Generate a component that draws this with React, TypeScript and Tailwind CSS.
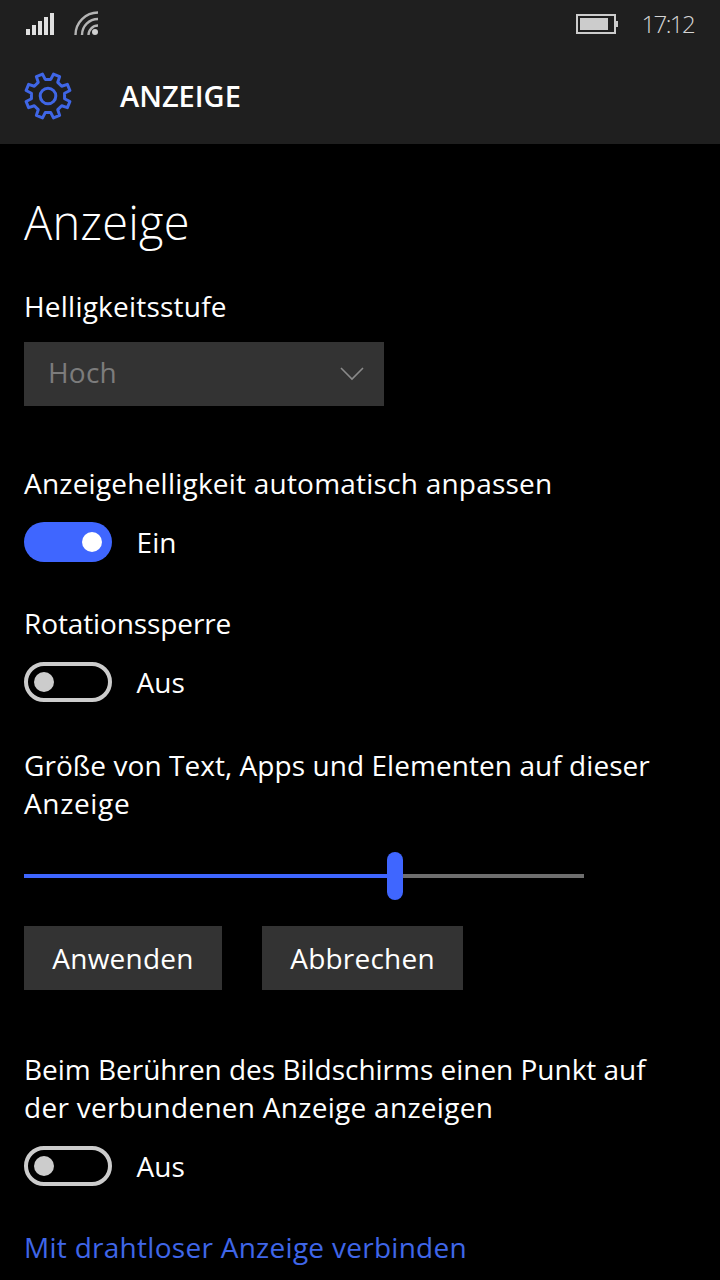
import React from 'react';

const Toggle = ({ on, label }: { on: boolean; label: string }) => (
    <div className="flex items-center h-10">
        {on ? (
            <div className="w-[88px] h-10 rounded-full bg-[#3f66ff] flex items-center justify-end pr-[10px]">
                <div className="w-5 h-5 rounded-full bg-white" />
            </div>
        ) : (
            <div className="w-[88px] h-10 rounded-full border-[4px] border-[#cccccc] flex items-center pl-[6px]">
                <div className="w-5 h-5 rounded-full bg-[#cccccc]" />
            </div>
        )}
        <span className="ml-[24.5px] text-[28px] leading-[38px] tracking-[0.1px] text-white">{label}</span>
    </div>
);

const SignalIcon = () => (
    <svg width="28" height="22" viewBox="0 0 28 22" fill="#e0e0e0">
        <rect x="0" y="16" width="4" height="6" />
        <rect x="6" y="12" width="4" height="10" />
        <rect x="12" y="8" width="4" height="14" />
        <rect x="18" y="4" width="4" height="18" />
        <rect x="24" y="0" width="4" height="22" />
    </svg>
);

const WifiIcon = () => (
    <svg width="24" height="24" viewBox="0 0 24 24" fill="none" stroke="#b4b4b4" strokeWidth="2.4">
        <path d="M1.5 24A22.5 22.5 0 0 1 24 1.5" />
        <path d="M8 24A16 16 0 0 1 24 8" />
        <path d="M14.5 24A9.5 9.5 0 0 1 24 14.5" />
        <circle cx="21" cy="21" r="3" fill="#d0d0d0" stroke="none" />
    </svg>
);

const BatteryIcon = () => (
    <svg width="42" height="20" viewBox="0 0 42 20">
        <rect x="1" y="1" width="38" height="18" fill="none" stroke="#cccccc" strokeWidth="2" />
        <rect x="4" y="4" width="28" height="12" fill="#cccccc" />
        <rect x="40" y="7" width="2" height="6" fill="#cccccc" />
    </svg>
);

// 8 teeth, rotated so a notch sits at the top
const gearPoints = Array.from({ length: 8 }, (_, i) => {
    const mid = 22.5 + i * 45;
    return [
        [mid - 13, 16.8],
        [mid - 8.5, 22.6],
        [mid + 8.5, 22.6],
        [mid + 13, 16.8],
    ]
        .map(([a, r]) => {
            const rad = (a * Math.PI) / 180;
            return `${(24 + r * Math.sin(rad)).toFixed(2)},${(24 - r * Math.cos(rad)).toFixed(2)}`;
        })
        .join(' ');
}).join(' ');

const GearIcon = () => (
    <svg width="48" height="48" viewBox="0 0 48 48" fill="none" stroke="#3f66e6" strokeWidth="3" strokeLinejoin="round">
        <polygon points={gearPoints} />
        <circle cx="24" cy="24" r="7.8" strokeWidth="3" />
    </svg>
);

export default function App() {
    return (
        <div className="w-[720px] h-[1280px] overflow-hidden bg-black text-white font-['Open_Sans',sans-serif]">
            <header className="h-[144px] bg-[#1f1f1f] px-6">
                <div className="h-[48px] flex items-center">
                    <div className="ml-[2px]">
                        <SignalIcon />
                    </div>
                    <div className="ml-[20px] mb-[2px]">
                        <WifiIcon />
                    </div>
                    <div className="ml-auto flex items-center">
                        <BatteryIcon />
                        <span className="ml-[23px] mr-[2px] text-[24px] font-light tracking-[-1.6px] text-[#d4d4d4]">17:12</span>
                    </div>
                </div>
                <div className="mt-[24px] h-[48px] flex items-center">
                    <GearIcon />
                    <span className="ml-[48px] text-[29px] font-semibold">ANZEIGE</span>
                </div>
            </header>

            <main className="px-6 text-[28px] leading-[38px] tracking-[0.22px]">
                <h1 className="mt-[46px] text-[47px] leading-[64px] font-[350] tracking-[0.2px]">Anzeige</h1>

                <p className="mt-[33px]">Helligkeitsstufe</p>
                <div className="mt-[17px] w-[360px] h-16 bg-[#333333] flex items-center justify-between pl-[24px] pr-[20px]">
                    <span className="mb-[5px] text-[#7c7c7c]">Hoch</span>
                    <svg width="24" height="14" viewBox="0 0 24 14" fill="none" stroke="#8a8a8a" strokeWidth="1.6">
                        <path d="M1 1L12 12L23 1" />
                    </svg>
                </div>

                <p className="mt-[58px]">Anzeigehelligkeit automatisch anpassen</p>
                <div className="mt-[20px]">
                    <Toggle on label="Ein" />
                </div>

                <p className="mt-[42px] tracking-[-0.11px]">Rotationssperre</p>
                <div className="mt-[20px]">
                    <Toggle on={false} label="Aus" />
                </div>

                <p className="mt-[44px] tracking-[0.06px]">
                    Größe von Text, Apps und Elementen auf dieser
                    <br />
                    <span className="tracking-[0.65px]">Anzeige</span>
                </p>

                <div className="mt-[30px] w-[560px] h-12 flex items-center">
                    <div className="w-[363px] h-1 bg-[#3f66ff]" />
                    <div className="w-4 h-12 rounded-full bg-[#3f66ff]" />
                    <div className="flex-1 h-1 bg-[#6e6e6e]" />
                </div>

                <div className="mt-[26px] flex gap-10">
                    <button className="w-[198px] h-16 bg-[#333333]">Anwenden</button>
                    <button className="w-[201px] h-16 bg-[#333333]">Abbrechen</button>
                </div>

                <p className="mt-[60px] tracking-[-0.02px]">
                    Beim Berühren des Bildschirms einen Punkt auf
                    <br />
                    <span className="tracking-[0.28px]">der verbundenen Anzeige anzeigen</span>
                </p>
                <div className="mt-[20px]">
                    <Toggle on={false} label="Aus" />
                </div>

                <p className="mt-[42px] tracking-[0.28px] text-[#3f66e8]">Mit drahtloser Anzeige verbinden</p>
            </main>
        </div>
    );
}
